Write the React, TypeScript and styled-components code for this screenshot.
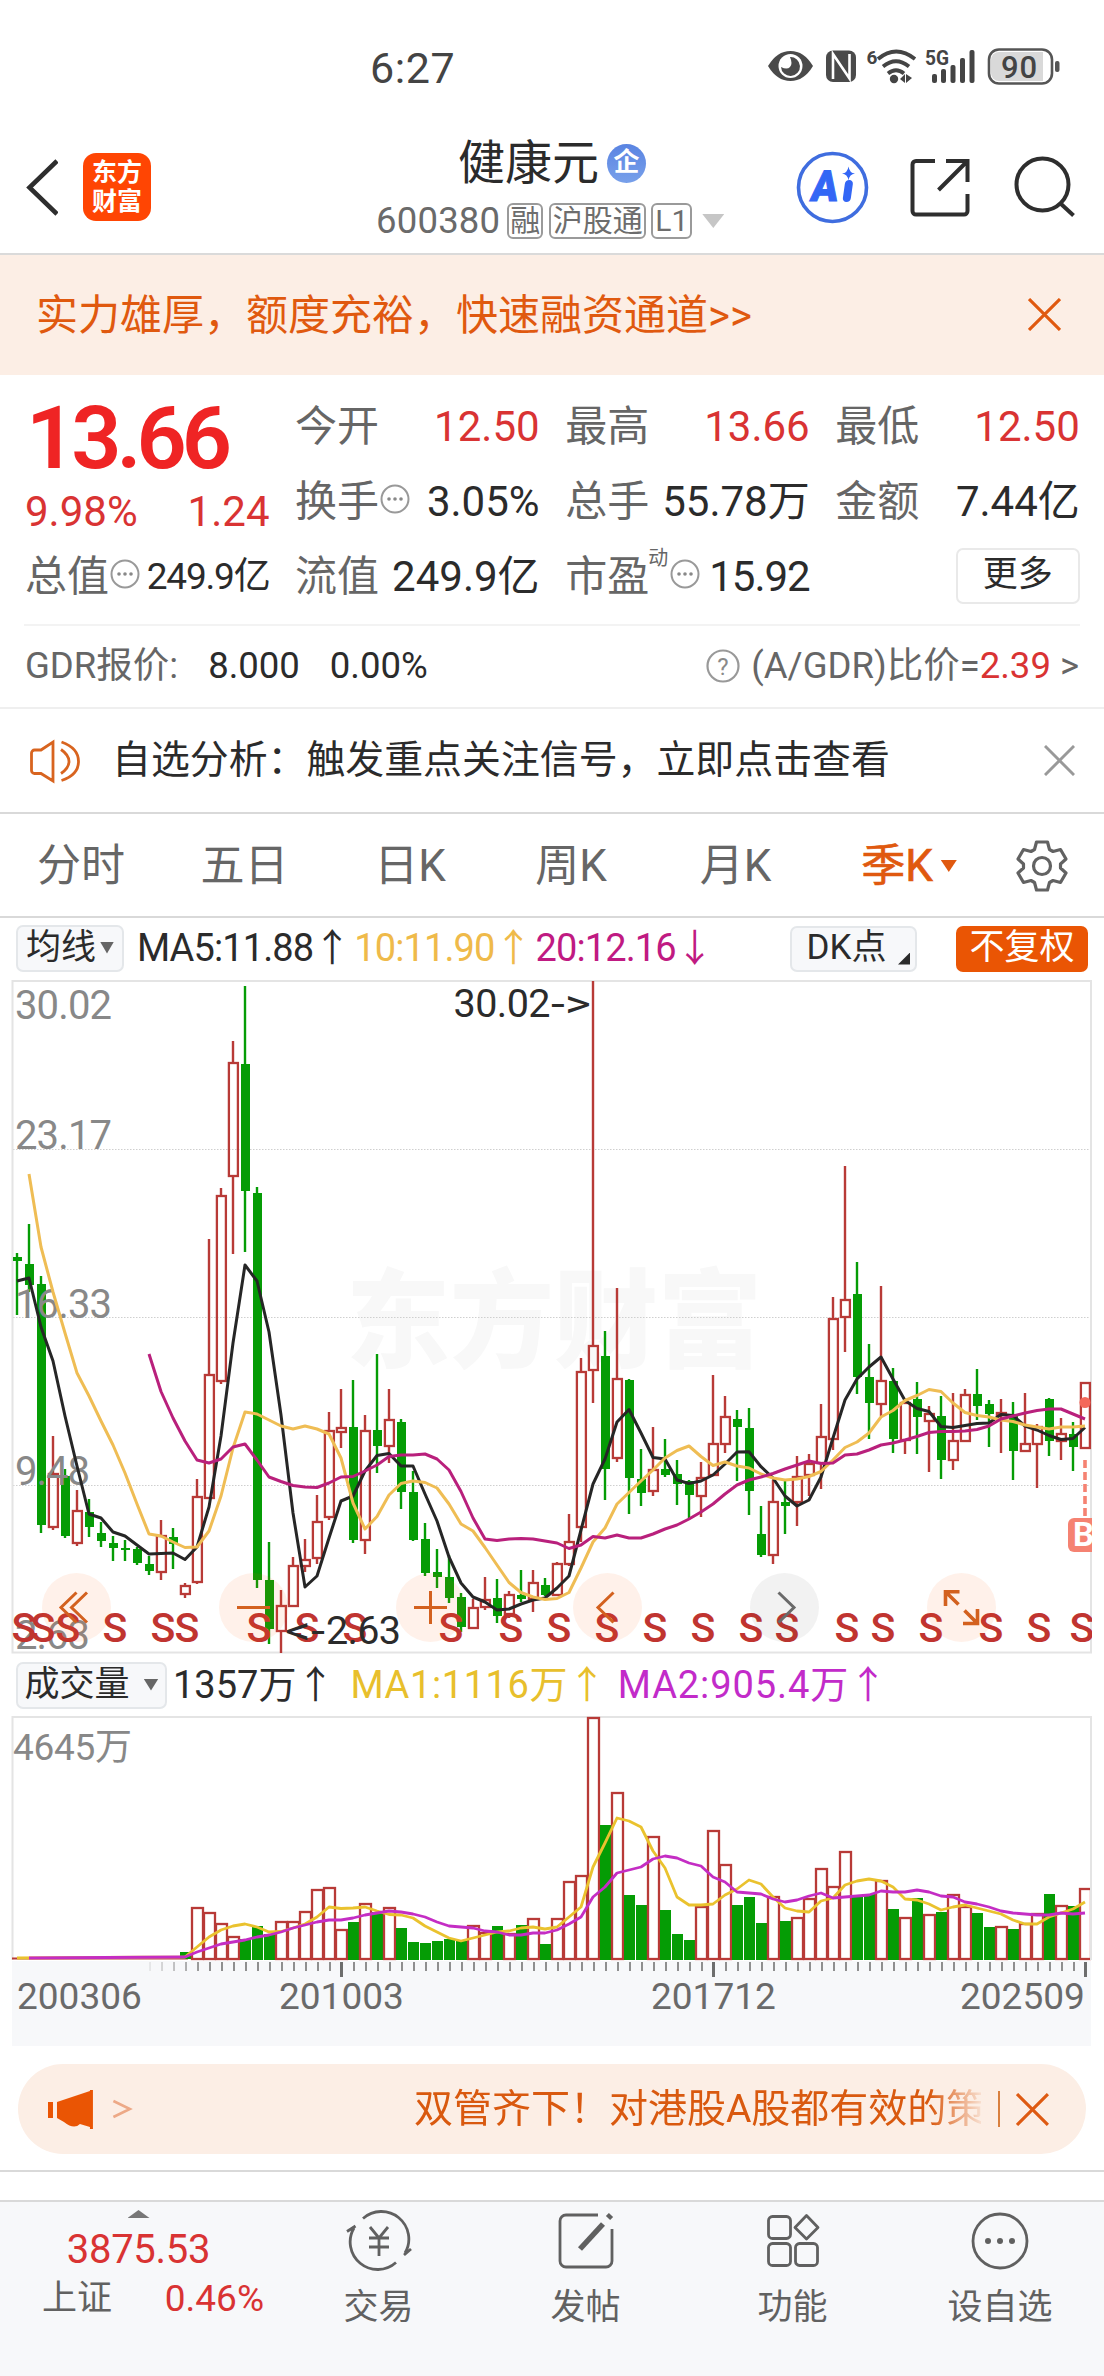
import React from "react";
import styled, { createGlobalStyle } from "styled-components";

const Global = createGlobalStyle`
  *, *::before, *::after { box-sizing: border-box; }
  body { margin: 0; background: #fff; }
`;

const C = {
  ink: "#2b2b2b",
  gray: "#666",
  red: "#d93333",
  up: "#b83a37",
  down: "#059c05",
  orange: "#e0590f",
  line: "#d9d9d9",
  peach: "#fceee5",
  panel: "#f7f8fa",
};

const Screen = styled.main`
  width: 1104px;
  height: 2376px;
  display: flex;
  flex-direction: column;
  overflow: hidden;
  background: #fff;
  color: ${C.ink};
  font-family: Roboto, "Noto Sans CJK SC", sans-serif;
  line-height: 1;
  white-space: nowrap;
`;

const Txt = styled.span<{ $size?: number; $color?: string; $ls?: number; $w?: number; $ml?: number }>`
  font-size: ${(p) => p.$size ?? 42}px;
  color: ${(p) => p.$color ?? C.ink};
  letter-spacing: ${(p) => p.$ls ?? 0}px;
  font-weight: ${(p) => p.$w ?? 400};
  margin-left: ${(p) => p.$ml ?? 0}px;
  line-height: 1.2;
`;

/* ---------- status bar ---------- */
const StatusBar = styled.div`
  height: 100px;
  flex: none;
  display: flex;
  align-items: flex-start;
  padding: 43px 44px 0 370px;
  justify-content: space-between;
`;
const StatusIcons = styled.svg`
  display: block;
  margin-top: 3px;
`;

/* ---------- header ---------- */
const Header = styled.header`
  height: 155px;
  flex: none;
  border-bottom: 2px solid #dadada;
  display: grid;
  grid-template-columns: 340px 1fr 330px;
`;
const HeaderLeft = styled.div`
  display: flex;
  gap: 25px;
  padding: 53px 0 0 25px;
`;
const Logo = styled.div`
  width: 68px;
  height: 68px;
  border-radius: 13px;
  background: #ff4503;
  color: #fff;
  display: flex;
  flex-direction: column;
  align-items: center;
  justify-content: center;
  font-size: 25px;
  font-weight: 700;
  line-height: 29px;
`;
const HeaderMid = styled.div`
  padding: 33px 0 0 36px;
`;
const TitleRow = styled.div`
  height: 60px;
  display: flex;
  align-items: center;
  gap: 8px;
  padding-left: 82px;
`;
const Badge = styled.span`
  width: 39px;
  height: 39px;
  border-radius: 50%;
  background: linear-gradient(#5a84e2, #78a0ea);
  color: #fff;
  font-size: 26px;
  font-weight: 700;
  display: flex;
  align-items: center;
  justify-content: center;
  padding-bottom: 2px;
`;
const CodeRow = styled.div`
  height: 56px;
  display: flex;
  align-items: center;
`;
const Tag = styled.span<{ $w: number; $ml: number }>`
  width: ${(p) => p.$w}px;
  margin-left: ${(p) => p.$ml}px;
  height: 36px;
  border: 2px solid #9a9a9a;
  border-radius: 6px;
  color: #6d6d6d;
  font-size: 30px;
  display: flex;
  align-items: center;
  justify-content: center;
  padding-bottom: 1px;
`;
const Triangle = styled.i<{ $w: number; $h: number; $c: string; $ml?: number; $up?: boolean }>`
  width: ${(p) => p.$w}px;
  height: ${(p) => p.$h}px;
  margin-left: ${(p) => p.$ml ?? 0}px;
  background: ${(p) => p.$c};
  clip-path: ${(p) => (p.$up ? "polygon(50% 0, 100% 100%, 0 100%)" : "polygon(0 0, 100% 0, 50% 100%)")};
`;

/* ---------- banner ---------- */
const Banner = styled.section`
  height: 120px;
  flex: none;
  background: ${C.peach};
  display: flex;
  align-items: center;
  justify-content: space-between;
  padding: 0 43px 1px 36px;
`;

/* ---------- quote ---------- */
const Quote = styled.section`
  height: 251px;
  flex: none;
  margin: 0 24px;
  padding: 15px 0 0 1px;
  border-bottom: 2px solid #f3f3f3;
  display: grid;
  grid-template-columns: repeat(4, 244.5px);
  grid-template-rows: repeat(3, 75px);
  column-gap: 25.600px;
`;
const PriceBlock = styled.div`
  grid-row: span 2;
  display: flex;
  flex-direction: column;
`;
const Price = styled.div`
  font-size: 88px;
  font-weight: 600;
  line-height: 100px;
  letter-spacing: -5px;
  color: #ef2424;
  height: 99px;
  margin-top: -2px;
  padding-left: 1px;
`;
const Between = styled.div`
  display: flex;
  align-items: center;
  justify-content: space-between;
`;
const Cell = styled(Between)`
  height: 75px;
`;
const LabelBox = styled.span`
  display: flex;
  align-items: center;
  color: ${C.gray};
`;
const Sup = styled.span`
  font-size: 20px;
  color: ${C.gray};
  align-self: flex-start;
  margin: -4px 2px 0 -1px;
`;
const MoreButton = styled.button`
  justify-self: end;
  align-self: center;
  margin-top: -4px;
  width: 124px;
  height: 56px;
  border: 2px solid #e9e9e9;
  border-radius: 7px;
  background: #fff;
  font: 35px/1 Roboto, "Noto Sans CJK SC", sans-serif;
  color: ${C.ink};
  padding: 0 0 3px;
`;

const GdrRow = styled.section`
  height: 83px;
  flex: none;
  border-bottom: 2px solid #efefef;
  padding: 0 25px 1px;
  display: flex;
  align-items: center;
`;
const Grow = styled.span`
  flex: 1;
`;
const NoticeRow = styled.section`
  height: 105px;
  flex: none;
  border-bottom: 2px solid ${C.line};
  padding: 0 29px 0 28px;
  display: flex;
  align-items: center;
`;

/* ---------- tabs ---------- */
const Tabs = styled.nav`
  height: 104px;
  flex: none;
  border-bottom: 2px solid ${C.line};
  padding-top: 2px;
  display: grid;
  grid-template-columns: 162px 165px 166px 156px 173px 174px 92px;
  align-items: center;
  justify-items: center;
`;
const Tab = styled.div<{ $on?: boolean }>`
  display: flex;
  align-items: center;
  font-size: 44px;
  line-height: 60px;
  color: ${(p) => (p.$on ? C.orange : "#666")};
  -webkit-text-stroke: ${(p) => (p.$on ? "0.7px" : "0")} currentColor;
`;

/* ---------- indicator rows ---------- */
const IndicatorRow = styled.div<{ $h: number }>`
  height: ${(p) => p.$h}px;
  flex: none;
  display: flex;
  align-items: center;
  padding: 1px 16px 0;
`;
const Chip = styled.button<{ $w: number; $h: number; $solid?: boolean; $shift?: number; $mr?: number }>`
  width: ${(p) => p.$w}px;
  height: ${(p) => p.$h}px;
  margin-right: ${(p) => p.$mr ?? 0}px;
  border: ${(p) => (p.$solid ? "0" : "2px solid #e4e7ea")};
  border-radius: 7px;
  background: ${(p) => (p.$solid ? "#ea5504" : "#f7f8fa")};
  color: ${(p) => (p.$solid ? "#fff" : C.ink)};
  font: 35px/1 Roboto, "Noto Sans CJK SC", sans-serif;
  display: flex;
  align-items: center;
  justify-content: center;
  padding: 0 ${(p) => p.$shift ?? 0}px 2px 0;
  position: relative;
`;
const Corner = styled.i`
  position: absolute;
  right: 5px;
  bottom: 5px;
  width: 12px;
  height: 12px;
  background: ${C.ink};
  clip-path: polygon(100% 0, 100% 100%, 0 100%);
`;

/* ---------- charts ---------- */
const ChartBox = styled.div`
  position: relative;
  flex: none;
`;
const Plot = styled.svg`
  display: block;
`;
const FloatTools = styled.div`
  position: absolute;
  left: 42px;
  right: 108px;
  bottom: 14px;
  display: flex;
  justify-content: space-between;
`;
const FloatButton = styled.button<{ $muted?: boolean }>`
  width: 69px;
  height: 69px;
  border: 0;
  padding: 0;
  border-radius: 50%;
  background: ${(p) => (p.$muted ? "rgba(60,60,60,.065)" : "rgba(255,90,10,.085)")};
  color: ${(p) => (p.$muted ? "#6a6a6a" : "#d3611f")};
`;
const AxisLabels = styled.div`
  height: 68px;
  flex: none;
  margin: 0 13px 0 12px;
  background: ${C.panel};
  display: grid;
  grid-template-columns: 268px 372px 309px 124px;
  align-items: start;
  padding-left: 5px;
`;
const AxisLabel = styled.span<{ $ml?: number }>`
  font-size: 37px;
  line-height: 38px;
  color: #6a6a6a;
  margin-left: ${(p) => p.$ml ?? 0}px;
`;

/* ---------- promo ---------- */
const Promo = styled.section`
  height: 90px;
  flex: none;
  margin: 18px 18px 16px;
  border-radius: 45px;
  background: ${C.peach};
  display: flex;
  align-items: center;
  padding: 0 37px 0 29px;
`;
const Marquee = styled.div`
  width: 568px;
  margin-left: 281px;
  overflow: hidden;
  font-size: 39px;
  line-height: 60px;
  color: #d9590f;
  mask-image: linear-gradient(90deg, #000 91%, transparent 101%);
`;
const Bar = styled.i`
  width: 2px;
  height: 36px;
  margin: 0 16px 0 17px;
  background: #d9803f;
`;
const Gap = styled.div`
  height: 30px;
  flex: none;
  border-top: 2px solid ${C.line};
`;

/* ---------- bottom nav ---------- */
const BottomNav = styled.footer`
  flex: 1;
  background: ${C.panel};
  border-top: 2px solid ${C.line};
  display: grid;
  grid-template-columns: 275px 207px 207px 207px 208px;
`;
const IndexBox = styled.div`
  display: flex;
  flex-direction: column;
  align-items: center;
  padding: 8px 0 0 2px;
`;
const IndexValue = styled.div`
  margin-top: 8px;
  font-size: 40px;
  line-height: 48px;
  letter-spacing: -0.3px;
  color: ${C.red};
`;
const IndexRow = styled.div`
  width: 222px;
  margin-left: 29px;
  display: flex;
  justify-content: space-between;
  align-items: center;
  height: 50px;
`;
const NavItem = styled.div`
  display: flex;
  flex-direction: column;
  align-items: center;
  padding-top: 8px;
  gap: 15px;
  font-size: 35px;
  line-height: 42px;
  color: #616161;
`;

/* ---------- icons ---------- */
const Cross = ({ size, color, w = 3 }: { size: number; color: string; w?: number }) => (
  <svg width={size} height={size} viewBox="0 0 32 32" fill="none" stroke={color} strokeWidth={w}>
    <path d="M1 1 31 31M31 1 1 31" />
  </svg>
);
const DotsIcon = styled.svg<{ $ml: number }>`
  margin: -6px 0 0 ${(p) => p.$ml}px;
`;
const Dots = ({ ml = 3 }: { ml?: number }) => (
  <DotsIcon $ml={ml} width="30" height="30" viewBox="0 0 30 30">
    <circle cx="15" cy="15" r="13.5" fill="none" stroke="#999" strokeWidth="2" />
    <g fill="#888">
      <circle cx="9" cy="15" r="1.8" />
      <circle cx="15" cy="15" r="1.8" />
      <circle cx="21" cy="15" r="1.8" />
    </g>
  </DotsIcon>
);
const HeaderIcons = () => (
  <svg width="330" height="150" viewBox="774 100 330 150" fill="none" stroke="#2e2e2e" strokeWidth="4">
    <circle cx="832.5" cy="187.5" r="34" stroke="#3f6ddf" strokeWidth="3.6" />
    <g transform="translate(832.500 190) skewX(-8) translate(-832.500 -190)">
      <text x="811" y="201.500" fontSize="43" fontWeight="900" fill="#3366f5" stroke="#3366f5" strokeWidth="1" textLength="27" lengthAdjust="spacingAndGlyphs">A</text>
      <path d="M848 184V198" stroke="#3366f5" strokeWidth="8" strokeLinecap="round" />
    </g>
    <path d="M848.500 166.500q1 6.500 6.500 7q-5.500.5-6.500 7q-1-6.500-6.500-7q5.500-.5 6.500-7z" fill="#3366f5" stroke="none" />
    <path d="M935 161H916a3.500 3.500 0 0 0-3.500 3.500V211a3.500 3.500 0 0 0 3.500 3.500H964a3.500 3.500 0 0 0 3.500-3.500V194" />
    <path d="M946 161H967.500V182M967 161.500 938.500 190" />
    <circle cx="1042.500" cy="184.500" r="26" />
    <path d="M1060 203 1073.500 215.500" />
  </svg>
);

const StatusGlyphs = () => (
  <StatusIcons width="294" height="40" viewBox="766 47 294 40">
    <path d="M768 67q9-15 22.500-15t22.500 15q-9 15-22.500 15t-22.500-15z" fill="#4a4a4a" />
    <circle cx="790.500" cy="67" r="12" fill="#fff" />
    <path d="M790 58a9.500 9.500 0 1 1-9 10q6 3 9 0t0-10z" fill="#4a4a4a" />
    <rect x="826" y="51.500" width="30" height="31.500" rx="7" fill="#4a4a4a" />
    <path d="M833 80V55L849.500 79.500V55" fill="none" stroke="#fff" strokeWidth="2.600" />
    <text x="866.500" y="65" fontSize="19" fontWeight="700" fill="#444">6</text>
    <g fill="none" stroke="#444" strokeWidth="3.800">
      <path d="M878 60Q896 45 915 60" />
      <path d="M883 67.500Q896 57 909 67.500" />
      <path d="M888 74.500Q896 68 904 74.500" />
    </g>
    <circle cx="894" cy="80" r="4.200" fill="#444" />
    <path d="M900 80l5-5v9zM906 75v9l6-5z" fill="#444" />
    <text x="925" y="65.500" fontSize="20" fontWeight="700" fill="#444" textLength="24" lengthAdjust="spacingAndGlyphs">5G</text>
    <g fill="#444">
      <rect x="932" y="75" width="5" height="9" rx="2" />
      <rect x="941" y="70" width="5" height="14" rx="2" />
      <rect x="950.500" y="66" width="5" height="18" rx="2" />
      <rect x="960" y="59" width="5" height="25" rx="2" />
      <rect x="969.500" y="51" width="5" height="33" rx="2" />
    </g>
    <rect x="989" y="50.500" width="63" height="34" rx="10" fill="#fff" stroke="#555" strokeWidth="2.600" />
    <path d="M999 53H1043V82H999a8 8 0 0 1-8-8V61a8 8 0 0 1 8-8z" fill="#d9d9d9" />
    <rect x="1055" y="62" width="4.500" height="11" rx="2" fill="#555" />
    <text x="1001" y="78.500" fontSize="31" fontWeight="500" fill="#444" textLength="36">90</text>
  </StatusIcons>
);

/* ---------- data: [rising, high, bodyTop, bodyBottom, low] in plot pixels ---------- */
type Candle = [number, number, number, number, number];
const candles: Candle[] = [
  [0,1253,1257,1261,1315],[0,1224,1264,1285,1292],[0,1276,1284,1525,1533],[1,1436,1473,1528,1530],[0,1469,1476,1536,1538],
  [1,1490,1510,1544,1546],[0,1499,1512,1527,1537],[0,1522,1533,1541,1547],[0,1536,1543,1548,1561],[0,1540,1548,1550,1561],
  [0,1547,1549,1563,1565],[0,1556,1564,1571,1575],[1,1520,1535,1573,1580],[0,1528,1537,1544,1569],[1,1583,1585,1595,1598],
  [1,1479,1496,1583,1584],[1,1239,1374,1499,1499],[1,1188,1195,1382,1384],[1,1041,1062,1177,1254],[0,986,1064,1191,1252],
  [0,1187,1193,1580,1588],[0,1542,1580,1629,1644],[1,1590,1605,1632,1653],[1,1557,1565,1607,1607],[1,1539,1559,1567,1572],
  [1,1495,1521,1559,1564],[1,1412,1430,1518,1520],[1,1389,1427,1433,1448],[0,1380,1427,1540,1543],[1,1415,1430,1541,1554],
  [0,1354,1430,1446,1473],[1,1389,1419,1447,1463],[0,1419,1422,1492,1509],[0,1471,1492,1540,1541],[0,1523,1539,1573,1576],
  [0,1549,1572,1577,1588],[0,1555,1577,1598,1603],[0,1593,1597,1627,1632],[1,1599,1607,1629,1629],[1,1577,1599,1608,1610],
  [0,1579,1598,1616,1623],[1,1591,1594,1615,1618],[0,1570,1595,1599,1602],[1,1570,1582,1600,1612],[0,1578,1585,1595,1596],
  [1,1562,1563,1596,1596],[1,1514,1541,1565,1566],[1,1358,1371,1528,1542],[1,981,1345,1371,1403],[0,1331,1356,1469,1500],
  [1,1288,1378,1459,1462],[0,1379,1380,1478,1514],[0,1449,1479,1493,1506],[1,1427,1469,1492,1496],[0,1439,1469,1475,1477],
  [0,1460,1474,1484,1505],[0,1480,1481,1495,1518],[1,1462,1477,1497,1517],[1,1375,1443,1476,1476],[1,1396,1416,1445,1453],
  [0,1410,1419,1427,1481],[0,1408,1428,1491,1515],[0,1506,1534,1555,1557],[1,1480,1501,1556,1564],[0,1480,1502,1506,1534],
  [1,1456,1476,1503,1526],[1,1454,1463,1476,1496],[1,1404,1436,1464,1489],[1,1297,1318,1440,1450],[1,1166,1299,1318,1352],
  [0,1262,1294,1377,1394],[0,1344,1377,1403,1439],[1,1286,1380,1405,1416],[0,1368,1381,1439,1453],[1,1402,1402,1441,1454],
  [0,1382,1399,1417,1454],[1,1406,1413,1422,1472],[0,1396,1416,1460,1479],[1,1393,1440,1461,1470],[1,1389,1394,1442,1442],
  [0,1369,1394,1406,1420],[0,1400,1404,1414,1447],[1,1399,1412,1416,1453],[0,1402,1414,1451,1480],[1,1393,1443,1452,1452],
  [1,1424,1426,1445,1488],[0,1398,1399,1441,1456],[1,1418,1433,1442,1460],[0,1422,1434,1447,1471],[1,1382,1382,1449,1449],
];
const ma5 = [1281,1278,1327,1361,1416,1466,1514,1518,1532,1536,1545,1554,1553.5,1553,1559.5,1547,1507,1436,1343,1265,1281,1332,1415,1513,1587,1576,1538,1501,1496,1471,1455.5,1453.5,1466,1466,1494,1521,1557,1583,1597,1602,1610,1609,1604,1600,1598,1588,1576,1530,1484,1459,1422,1409.5,1433,1457.5,1459,1480,1483.5,1481,1475,1464,1452,1451.7,1466.7,1478,1496,1506,1500,1477,1438,1400,1379,1367,1357,1379,1400.5,1408.5,1411.5,1426.5,1427.5,1425.5,1423.5,1423,1414.5,1415.5,1426,1430,1435.5,1439.5,1438.5,1427.5];
const ma10 = [1174,1247,1292,1333,1373,1396,1421,1445,1473,1504,1534,1536,1542,1547.5,1547,1531,1496,1448,1412,1414,1420,1426,1429,1426,1429,1434,1458,1503,1529,1516.5,1495,1483.5,1481,1482.5,1488,1504,1524,1531,1547.5,1565,1582.5,1592.5,1597,1599.5,1598.5,1592.5,1568,1542,1528,1504,1492.5,1481,1470,1458,1450.5,1446,1456.5,1465.5,1462,1466,1468,1474,1478,1480,1479,1476.5,1471.5,1460,1447.5,1442,1433,1417,1410.5,1400.5,1395.5,1389.5,1391.5,1403,1412.5,1415.5,1417,1420,1421.5,1425,1427,1429,1427,1427,1426];
const ma20 = [1354,1391.5,1418,1441,1460,1463,1459,1447,1444,1460,1477,1481.5,1485.5,1487,1487.5,1483,1477,1476.5,1471,1465,1456.5,1455,1455,1454,1459,1470,1491.5,1518,1539,1540.5,1539,1538.5,1539,1541,1543,1548.5,1545,1536.5,1538,1535,1538,1538,1534,1529,1525,1519,1512,1504,1494,1485,1480,1477,1473.5,1469,1465,1461,1463.5,1463,1455,1454,1450,1445,1443,1440,1436.5,1432.5,1431.5,1431.5,1431,1429.5,1426,1419,1416,1413,1410.5,1409,1409,1414,1419];
const signals = [24,43,68,115,163,187,259,307,355,451,511,559,607,655,703,751,787,847,883,931,991,1039,1082];

/* volume bars from the 16th quarter onward: [rising, top] */
const volumes: [number, number][] = [
  [1,1907],[1,1912],[1,1923],[1,1936],[0,1939],[0,1926],[0,1934],[1,1921],[1,1921],[1,1911],[1,1889],[1,1887],[1,1929],[0,1922],[1,1903],
  [0,1912],[1,1907],[0,1928],[0,1942],[0,1943],[0,1941],[0,1939],[0,1941],[1,1925],[1,1932],[0,1926],[1,1933],[0,1925],[1,1918],[0,1944],
  [1,1918],[1,1881],[1,1875],[1,1717],[0,1825],[1,1792],[0,1895],[0,1905],[1,1836],[0,1910],[0,1934],[0,1940],[1,1906],[1,1830],[1,1864],
  [0,1905],[0,1897],[0,1923],[1,1896],[0,1921],[1,1917],[1,1898],[1,1868],[1,1886],[1,1851],[0,1897],[0,1894],[1,1880],[0,1909],[1,1917],
  [0,1898],[1,1914],[0,1912],[1,1894],[1,1906],[0,1913],[0,1927],[1,1926],[0,1929],[1,1923],[1,1913],[0,1894],[1,1905],[0,1906],[1,1888],
];
const vma1 = [1957,1947,1937,1930,1926,1924,1927,1932,1931.5,1928,1924,1917,1907,1908.5,1908,1907,1911,1914.5,1915,1918,1926,1932,1938,1941,1938,1935,1932,1931,1928,1927,1929,1927,1917,1907,1867,1843,1818,1821,1827,1851,1868,1897,1905,1905,1904,1895,1889,1880,1884,1897,1908,1911,1912,1901,1898,1885,1881,1879,1881,1887,1899,1900,1904,1910,1907,1905,1908,1911,1914,1920,1924,1924,1917,1913,1909,1902];
const vma2 = [1957,1952,1948,1944,1942,1940,1937,1935,1932,1928,1925,1922,1920,1920,1918,1915,1913,1911,1912,1914,1917,1922,1926,1927,1928,1931,1932,1935,1935,1933,1933,1930,1924,1917,1897,1887,1873,1870,1867,1859,1856,1858,1863,1866,1877,1882,1892,1893,1894,1899,1902,1900,1896,1893,1898,1897,1896,1895,1891,1892,1892,1890,1892,1896,1897,1902,1904,1907,1911,1913,1914,1915,1915,1913,1914,1913];

const cx = (i: number) => 17 + 12 * i;
const linePath = (ys: number[], start: number) => ys.map((y, k) => `${cx(start + k)},${y}`).join(" ");

const PriceChart = () => (
  <Plot width="1104" height="678" viewBox="0 978 1104 678">
    <defs>
      <clipPath id="plot"><rect x="12" y="979" width="1080" height="676" /></clipPath>
    </defs>
    <text x="346" y="1359" fontSize="107" fontWeight="900" fill="#f8f8f8" textLength="416" lengthAdjust="spacingAndGlyphs">东方财富</text>
    <g stroke="#cfcfcf" strokeWidth="1" strokeDasharray="1.500 1.500">
      <path d="M13 1149.500H1091M13 1317.500H1091M13 1485.500H1091" />
    </g>
    <rect x="12.500" y="981" width="1078.500" height="671.500" fill="none" stroke="#e4e4e4" strokeWidth="2" />
    <g clipPath="url(#plot)">
      {candles.map(([up, hi, t, b, lo], i) => {
        const x = cx(i);
        return up ? (
          <g key={i} fill={C.up}>
            {hi < t && <rect x={x - 1.2} y={hi} width="2.400" height={t - hi} />}
            {lo > b && <rect x={x - 1.2} y={b} width="2.400" height={lo - b} />}
            <rect x={x - 4.1} y={t + 1} width="9" height={Math.max(b - t - 2, 1)} fill="none" stroke={C.up} strokeWidth="2.300" />
          </g>
        ) : (
          <g key={i} fill={C.down}>
            <rect x={x - 1.2} y={hi} width="2.400" height={lo - hi} />
            <rect x={x - 4} y={t} width="9" height={b - t} />
          </g>
        );
      })}
      <g fill="#888" fontSize="40">
        <text x="15" y="1019" textLength="97">30.02</text>
        <text x="15" y="1149" textLength="97">23.17</text>
        <text x="15" y="1318" textLength="97">16.33</text>
        <text x="15" y="1485" textLength="75">9.48</text>
        <text x="15" y="1649" textLength="75">2.63</text>
      </g>
      <g fill="none" strokeWidth="3" strokeLinejoin="round">
        <polyline points={linePath(ma5, 0)} stroke="#262626" />
        <polyline points={linePath(ma10, 1)} stroke="#efbd54" />
        <polyline points={linePath(ma20, 11)} stroke="#b9207c" />
      </g>
      <g fill="#c03430" fontSize="41" fontWeight="500" textAnchor="middle">
        {signals.map((x) => <text key={x} x={x} y="1642">S</text>)}
      </g>
      <g fill={C.ink} fontSize="39.500">
        <text x="453.500" y="1016.500" textLength="97">30.02</text>
        <text x="551" y="1016.500" textLength="40" lengthAdjust="spacingAndGlyphs">-&gt;</text>
        <text x="285" y="1644" textLength="40" lengthAdjust="spacingAndGlyphs">&lt;-</text>
        <text x="326" y="1644" textLength="75">2.63</text>
      </g>
      <path d="M1085 1460V1518" stroke="#f58272" strokeWidth="3.600" strokeDasharray="8 4" />
      <circle cx="1085" cy="1402.500" r="5.500" fill="#f4685a" />
      <rect x="1068" y="1518" width="40" height="34" rx="6" fill="#f58272" />
      <text x="1073" y="1546" fontSize="33" fontWeight="700" fill="#fff">B</text>
    </g>
  </Plot>
);

const VolumeChart = () => (
  <Plot width="1104" height="264" viewBox="0 1714 1104 264">
    <defs>
      <linearGradient id="tickFade" gradientUnits="userSpaceOnUse" x1="138" y1="0" x2="205" y2="0">
        <stop offset="0" stopColor="#999" stopOpacity="0" />
        <stop offset="1" stopColor="#8f8f8f" />
      </linearGradient>
    </defs>
    <rect x="12" y="1961" width="1079" height="17" fill={C.panel} />
    <path d="M12.500 1960V1717H1091V1960" fill="none" stroke="#e4e4e4" strokeWidth="2" />
    <text x="13" y="1760" fontSize="37" fill="#888" textLength="119">4645万</text>
    <rect x="12" y="1957.500" width="176" height="2" fill={C.up} />
    <rect x="154" y="1956" width="14" height="2" fill={C.up} />
    <rect x="180" y="1952" width="11" height="7" fill={C.down} />
    {volumes.map(([up, t], k) => {
      const x = cx(k + 15);
      return up ? (
        <rect key={k} x={x - 5} y={t + 1} width="11" height={1958 - t} fill="none" stroke={C.up} strokeWidth="2.300" />
      ) : (
        <rect key={k} x={x - 5} y={t} width="11" height={1960 - t} fill={C.down} />
      );
    })}
    <g fill="none" strokeWidth="2.800" strokeLinejoin="round">
      <polyline points={`17,1958 ${linePath(vma1, 14)}`} stroke="#eac22e" />
      <polyline points={`29,1958 ${linePath(vma2, 14)}`} stroke="#c42dc4" />
    </g>
    <rect x="1091" y="1717" width="13" height="245" fill="#fff" />
    <path d="M1091 1716V1960" stroke="#e4e4e4" strokeWidth="2" />
    <g fill="url(#tickFade)">
      {Array.from({ length: 79 }, (_, k) => k + 11).map((i) => (
        <rect key={i} x={cx(i)} y="1962" width="2" height="9" />
      ))}
    </g>
    <g fill="#6d6d6d">
      {[27, 58, 89].map((i) => <rect key={i} x={cx(i) - 1} y="1962" width="3" height="15" />)}
    </g>
  </Plot>
);

const ToolIcon = ({ d, w = 3 }: { d: string; w?: number }) => (
  <svg width="69" height="69" viewBox="-34.500 -34.500 69 69" fill="none" stroke="currentColor" strokeWidth={w}>
    <path d={d} />
  </svg>
);
const tools = [
  "M0-15-15.500 0 0 15M10.500-15-5 0 10.500 15",
  "M-16.500 0H16.500",
  "M-16.500 0H16.500M0-16.500V16.500",
  "M6-15-9.500 0 6 15",
  "M-6-15 9.500 0-6 15",
  "M-2-15.700H-16V-1.500M-16-15.700-3-3M16 1.500V16H1.500M16 16 3 3",
];

const NavIcon = ({ children }: { children: React.ReactNode }) => (
  <svg width="68" height="62" viewBox="-34 -31 68 62" fill="none" stroke="#606060" strokeWidth="2.800">{children}</svg>
);

export default function App() {
  return (
    <Screen>
      <Global />
      <StatusBar>
        <Txt $size={43} $color="#444" $ls={0.6}>6:27</Txt>
        <StatusGlyphs />
      </StatusBar>

      <Header>
        <HeaderLeft>
          <svg width="33" height="68" viewBox="25 153 33 68" fill="none" stroke="#2e2e2e" strokeWidth="4.600"><path d="M57 161 29.500 187.500 57 214" /></svg>
          <Logo><span>东方</span><span>财富</span></Logo>
        </HeaderLeft>
        <HeaderMid>
          <TitleRow>
            <Txt $size={47}>健康元</Txt>
            <Badge>企</Badge>
          </TitleRow>
          <CodeRow>
            <Txt $size={36.5} $color="#6a6a6a" $ls={0.2}>600380</Txt>
            <Tag $w={36} $ml={7}>融</Tag>
            <Tag $w={97} $ml={6}>沪股通</Tag>
            <Tag $w={41} $ml={5}>L1</Tag>
            <Triangle $w={22} $h={14} $c="#c6c6c6" $ml={10} />
          </CodeRow>
        </HeaderMid>
        <HeaderIcons />
      </Header>

      <Banner>
        <Txt $color={C.orange} style={{ paddingTop: 4 }}>实力雄厚，额度充裕，快速融资通道&gt;&gt;</Txt>
        <Cross size={33} color={C.orange} />
      </Banner>

      <Quote>
        <PriceBlock>
          <Price>13.66</Price>
          <Between>
            <Txt $color={C.red}>9.98%</Txt>
            <Txt $color={C.red}>1.24</Txt>
          </Between>
        </PriceBlock>
        <Cell><Txt $color={C.gray}>今开</Txt><Txt $color={C.red}>12.50</Txt></Cell>
        <Cell><Txt $color={C.gray}>最高</Txt><Txt $color={C.red}>13.66</Txt></Cell>
        <Cell><Txt $color={C.gray}>最低</Txt><Txt $color={C.red}>12.50</Txt></Cell>
        <Cell><LabelBox><Txt $color={C.gray}>换手</Txt><Dots ml={1} /></LabelBox><Txt>3.05%</Txt></Cell>
        <Cell><Txt $color={C.gray}>总手</Txt><Txt>55.78万</Txt></Cell>
        <Cell><Txt $color={C.gray}>金额</Txt><Txt>7.44亿</Txt></Cell>
        <Cell><LabelBox><Txt $color={C.gray}>总值</Txt><Dots ml={1} /></LabelBox><Txt $size={37} $ls={-1.2}>249.9亿</Txt></Cell>
        <Cell><Txt $color={C.gray}>流值</Txt><Txt>249.9亿</Txt></Cell>
        <Cell><LabelBox><Txt $color={C.gray}>市盈</Txt><Sup>动</Sup><Dots ml={0} /></LabelBox><Txt $ls={-1}>15.92</Txt></Cell>
        <MoreButton>更多</MoreButton>
      </Quote>

      <GdrRow>
        <Txt $size={36.5} $color={C.gray}>GDR报价:</Txt>
        <Txt $size={36.5} $ml={30}>8.000</Txt>
        <Txt $size={36.5} $ml={30}>0.00%</Txt>
        <Grow />
        <svg width="34" height="34" viewBox="0 0 34 34"><circle cx="17" cy="17" r="15.500" fill="none" stroke="#999" strokeWidth="2.200" /><text x="17" y="25.500" fontSize="24" fill="#8a8a8a" textAnchor="middle">?</text></svg>
        <Txt $size={36.5} $color={C.gray} $ml={11}>(A/GDR)比价=</Txt>
        <Txt $size={36.5} $color={C.red}>2.39</Txt>
        <Txt $size={36.5} $color={C.gray} $ml={9}>&gt;</Txt>
      </GdrRow>

      <NoticeRow>
        <svg width="54" height="46" viewBox="28 737 54 46" fill="none" stroke="#d8641f" strokeWidth="2.800">
          <path d="M53 741V780L41 772.500H34.500a3 3 0 0 1-3-3V752a3 3 0 0 1 3-3H41zM61 748.500Q69 754 69 760.500T61 772.500M61.500 741Q78.500 747 78.500 760.500T61.500 779.500" />
        </svg>
        <Txt $size={38.9} $ml={30}>自选分析：触发重点关注信号，立即点击查看</Txt>
        <Grow />
        <Cross size={31} color="#999" />
      </NoticeRow>

      <Tabs>
        <Tab>分时</Tab>
        <Tab>五日</Tab>
        <Tab>日K</Tab>
        <Tab>周K</Tab>
        <Tab>月K</Tab>
        <Tab $on>季K<Triangle $w={16} $h={12} $c="#e0590f" $ml={8} /></Tab>
        <svg width="54" height="54" viewBox="-27 -27 54 54" fill="none" stroke="#626262" strokeWidth="3.200" strokeLinejoin="round">
          <path d="M-5.500-24H5.500L7.500-16.500L11-14.500L18.500-16.500L24-7L18.500-2V2L24 7L18.500 16.500L11 14.500L7.500 16.500L5.500 24H-5.500L-7.500 16.500L-11 14.500L-18.500 16.500L-24 7L-18.500 2V-2L-24-7L-18.500-16.500L-11-14.500L-7.500-16.500Z" />
          <circle r="8.500" />
        </svg>
      </Tabs>

      <IndicatorRow $h={60}>
        <Chip $w={108} $h={47}>均线<Triangle $w={14} $h={12} $c="#666" $ml={4} /></Chip>
        <Txt $size={38} $ls={-0.9} $ml={13}>MA5:11.88↑</Txt>
        <Txt $size={38} $ls={-0.9} $color="#efba4a" $ml={4}>10:11.90↑</Txt>
        <Txt $size={38} $ls={-0.9} $color="#c01a82" $ml={4}>20:12.16↓</Txt>
        <Grow />
        <Chip $w={127} $h={46} $shift={14} $mr={39}>DK点<Corner /></Chip>
        <Chip $w={132} $h={46} $solid>不复权</Chip>
      </IndicatorRow>

      <ChartBox>
        <PriceChart />
        <FloatTools>
          {tools.map((d, i) => (
            <FloatButton key={i} $muted={i === 4}><ToolIcon d={d} w={i === 5 ? 3.6 : 3} /></FloatButton>
          ))}
        </FloatTools>
      </ChartBox>

      <IndicatorRow $h={58}>
        <Chip $w={151} $h={47}>成交量<Triangle $w={15} $h={12} $c="#666" $ml={14} /></Chip>
        <Txt $size={38} $ml={6}>1357万↑</Txt>
        <Txt $size={38} $color="#e8bf2c" $ml={16} $ls={0.6}>MA1:1116万↑</Txt>
        <Txt $size={38} $color="#c22bc9" $ml={11} $ls={0.9}>MA2:905.4万↑</Txt>
      </IndicatorRow>

      <ChartBox><VolumeChart /></ChartBox>
      <AxisLabels>
        <AxisLabel>200306</AxisLabel>
        <AxisLabel $ml={-6}>201003</AxisLabel>
        <AxisLabel $ml={-6}>201712</AxisLabel>
        <AxisLabel $ml={-6}>202509</AxisLabel>
      </AxisLabels>

      <Promo>
        <svg width="86" height="42" viewBox="47 2087 86 42">
          <path d="M48 2101h5v16h-5zM57 2101 90 2090V2089h3v39h-3V2126L80 2123Q74 2129 64 2121L57 2117z" fill="#ea5504" />
          <path d="M113.500 2100 130 2108 113.500 2116" fill="none" stroke="#eda987" strokeWidth="2.600" />
        </svg>
        <Marquee>双管齐下！对港股A股都有效的策</Marquee>
        <Bar />
        <Cross size={33} color="#de5a12" />
      </Promo>

      <Gap />

      <BottomNav>
        <IndexBox>
          <Triangle $w={22} $h={8} $c="#777" $up />
          <IndexValue>3875.53</IndexValue>
          <IndexRow>
            <Txt $size={35} $color="#616161">上证</Txt>
            <Txt $size={37} $color={C.red}>0.46%</Txt>
          </IndexRow>
        </IndexBox>
        <NavItem>
          <NavIcon>
            <path d="M-16-22.500A27.500 27.500 0 0 1 26 12M25 14 32 8M17 21.500A27.500 27.500 0 0 1-25-13M-23.500-15-32-9.500" />
            <path d="M-9-14 0-3 9-14M0-3V15M-10-3H10M-10 6H10" />
          </NavIcon>
          交易
        </NavItem>
        <NavItem>
          <NavIcon>
            <path d="M12-26H-20a6 6 0 0 0-6 6V20a6 6 0 0 0 6 6H20a6 6 0 0 0 6-6V-12" />
            <path d="M17-17-6 8" strokeWidth="5.500" />
            <path d="M22-23 25-26" strokeWidth="6" />
          </NavIcon>
          发帖
        </NavItem>
        <NavItem>
          <NavIcon>
            <rect x="-24.500" y="-24.500" width="22" height="22" rx="4" />
            <rect x="-24.500" y="2.500" width="22" height="22" rx="4" />
            <rect x="2.500" y="2.500" width="22" height="22" rx="4" />
            <path d="M13.500-25.500 25-13.500 13.500-2 2-13.500Z" strokeLinejoin="round" />
          </NavIcon>
          功能
        </NavItem>
        <NavItem>
          <NavIcon>
            <circle r="27" />
            <g fill="#606060" stroke="none"><circle cx="-12" r="3" /><circle r="3" /><circle cx="12" r="3" /></g>
          </NavIcon>
          设自选
        </NavItem>
      </BottomNav>
    </Screen>
  );
}
